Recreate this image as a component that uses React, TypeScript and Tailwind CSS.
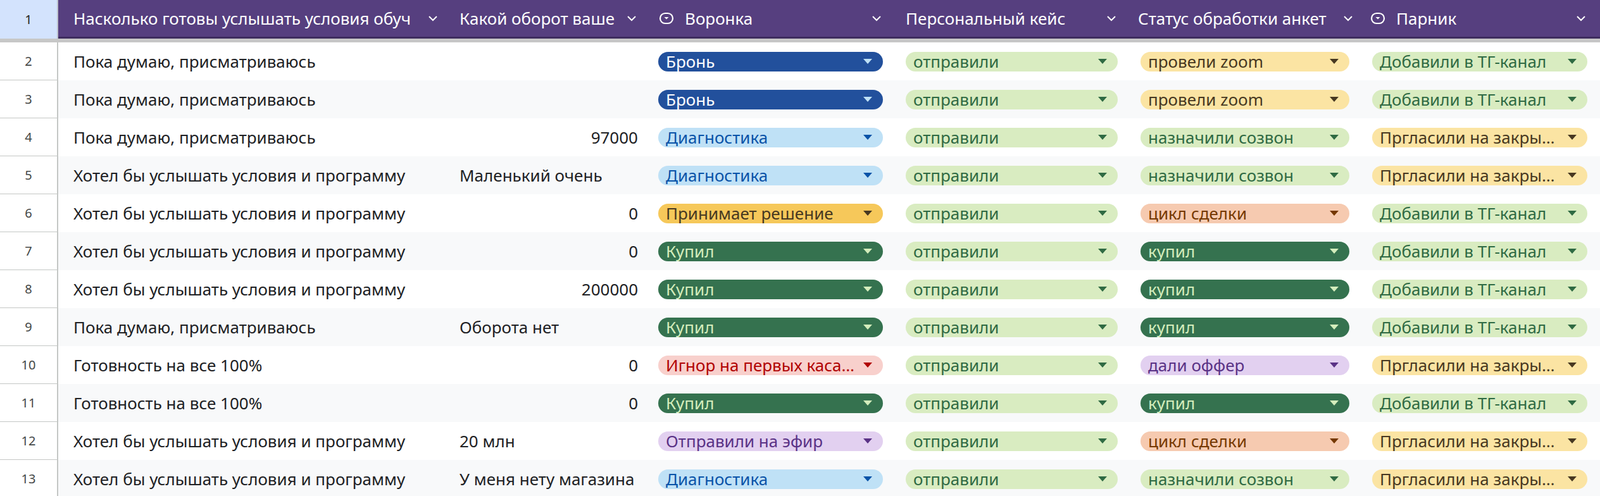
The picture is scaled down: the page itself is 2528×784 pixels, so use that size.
import React from 'react';

type Chip = { t: string; bg: string; fg: string; ar: string };

const C: Record<string, Chip> = {
  bron: { t: 'Бронь', bg: 'bg-[#22509c]', fg: 'text-white', ar: 'text-[#bfe1f6]' },
  diag: { t: 'Диагностика', bg: 'bg-[#bfe1f6]', fg: 'text-[#0a53a8]', ar: 'text-[#0a53a8]' },
  prin: { t: 'Принимает решение', bg: 'bg-[#f6c85a]', fg: 'text-[#473821]', ar: 'text-[#473821]' },
  kupil: { t: 'Купил', bg: 'bg-[#35724f]', fg: 'text-[#d4edbc]', ar: 'text-[#d4edbc]' },
  ignor: { t: 'Игнор на первых каса…', bg: 'bg-[#f8d0cc]', fg: 'text-[#b10202]', ar: 'text-[#b10202]' },
  efir: { t: 'Отправили на эфир', bg: 'bg-[#e2d0f0]', fg: 'text-[#5a3286]', ar: 'text-[#5a3286]' },
  otpr: { t: 'отправили', bg: 'bg-[#d9ecc1]', fg: 'text-[#2f6a43]', ar: 'text-[#2f6a43]' },
  zoom: { t: 'провели zoom', bg: 'bg-[#fbe4a3]', fg: 'text-[#473821]', ar: 'text-[#473821]' },
  sozv: { t: 'назначили созвон', bg: 'bg-[#d9ecc1]', fg: 'text-[#2f6a43]', ar: 'text-[#2f6a43]' },
  cikl: { t: 'цикл сделки', bg: 'bg-[#f6cab0]', fg: 'text-[#753800]', ar: 'text-[#753800]' },
  kup: { t: 'купил', bg: 'bg-[#35724f]', fg: 'text-[#d4edbc]', ar: 'text-[#d4edbc]' },
  offer: { t: 'дали оффер', bg: 'bg-[#e2d0f0]', fg: 'text-[#5a3286]', ar: 'text-[#5a3286]' },
  tg: { t: 'Добавили в ТГ-канал', bg: 'bg-[#d9ecc1]', fg: 'text-[#2f6a43]', ar: 'text-[#2f6a43]' },
  zakr: { t: 'Пргласили на закры…', bg: 'bg-[#fbe4a3]', fg: 'text-[#473821]', ar: 'text-[#473821]' },
};

const A1 = 'Пока думаю, присматриваюсь';
const A2 = 'Хотел бы услышать условия и программу';
const A3 = 'Готовность на все 100%';

const rows: [string, string, boolean, string, string, string][] = [
  [A1, '', false, 'bron', 'zoom', 'tg'],
  [A1, '', false, 'bron', 'zoom', 'tg'],
  [A1, '97000', true, 'diag', 'sozv', 'zakr'],
  [A2, 'Маленький очень', false, 'diag', 'sozv', 'zakr'],
  [A2, '0', true, 'prin', 'cikl', 'tg'],
  [A2, '0', true, 'kupil', 'kup', 'tg'],
  [A2, '200000', true, 'kupil', 'kup', 'tg'],
  [A1, 'Оборота нет', false, 'kupil', 'kup', 'tg'],
  [A3, '0', true, 'ignor', 'offer', 'zakr'],
  [A3, '0', true, 'kupil', 'kup', 'tg'],
  [A2, '20 млн', false, 'efir', 'cikl', 'zakr'],
  [A2, 'У меня нету магазина', false, 'diag', 'sozv', 'zakr'],
];

const Chev = () => (
  <svg width="20" height="20" viewBox="0 0 20 20" className="shrink-0">
    <path d="M4 7l6 6 6-6" fill="none" stroke="white" strokeWidth="2" />
  </svg>
);

const DropIcon = () => (
  <svg width="26" height="26" viewBox="0 0 26 26" className="shrink-0">
    <rect x="3" y="5" width="20" height="16" rx="8" fill="none" stroke="white" strokeWidth="2.2" />
    <path d="M9.5 11l3.5 3.5 3.5-3.5z" fill="white" />
  </svg>
);

const ChipCell = ({ k, w }: { k: string; w: string }) => {
  const c = C[k];
  return (
    <div className={`${w} shrink-0 flex items-center pl-4 pr-5`}>
      <div className={`w-full h-[31px] rounded-full ${c.bg} flex items-center justify-between pl-3 pr-4`}>
        <span className={`${c.fg} text-[26px] leading-none whitespace-nowrap`}>{c.t}</span>
        <svg width="16" height="10" viewBox="0 0 16 10" className={c.ar}>
          <path d="M1 1h14L8 9z" fill="currentColor" />
        </svg>
      </div>
    </div>
  );
};

const W = ['w-[92px]', 'w-[618px]', 'w-[314px]', 'w-[391px]', 'w-[371px]', 'w-[366px]', 'w-[376px]'];

export default function App() {
  return (
    <div className="w-[2528px] h-[784px] overflow-hidden bg-white font-['Roboto',sans-serif] text-[26px] text-[#202124]">
      <div className="flex h-[61px]">
        <div className={`${W[0]} shrink-0 bg-[#d3e3fd] flex items-center justify-center text-[20px] text-[#1f1f1f] border-r-2 border-[#bcc3cc]`}>1</div>
        <div className="flex flex-1 bg-[#563f7f] text-white border-b-[3px] border-[#3e2c5e]">
          <div className={`${W[1]} shrink-0 flex items-center gap-2 pl-6 pr-4 overflow-hidden`}>
            <span className="whitespace-nowrap overflow-hidden flex-1">Насколько готовы услышать условия обуч</span><Chev />
          </div>
          <div className={`${W[2]} shrink-0 flex items-center gap-2 pl-4 pr-4 overflow-hidden`}>
            <span className="whitespace-nowrap overflow-hidden flex-1">Какой оборот ваше</span><Chev />
          </div>
          <div className={`${W[3]} shrink-0 flex items-center gap-4 pl-4 pr-5`}>
            <DropIcon /><span className="flex-1">Воронка</span><Chev />
          </div>
          <div className={`${W[4]} shrink-0 flex items-center pl-4 pr-5`}>
            <span className="flex-1">Персональный кейс</span><Chev />
          </div>
          <div className={`${W[5]} shrink-0 flex items-center pl-3 pr-3`}>
            <span className="flex-1 whitespace-nowrap overflow-hidden">Статус обработки анкет</span><Chev />
          </div>
          <div className={`${W[6]} shrink-0 flex items-center gap-4 pl-3 pr-5`}>
            <DropIcon /><span className="flex-1">Парник</span><Chev />
          </div>
        </div>
      </div>
      <div className="h-[6px] bg-[#c7c7c7]" />
      {rows.map((r, i) => (
        <div key={i} className={`flex h-[60px] ${i % 2 ? 'bg-[#f8f9fa]' : 'bg-white'}`}>
          <div className={`${W[0]} shrink-0 bg-white flex items-center justify-center text-[20px] text-[#444746] border-r-2 border-b border-[#c4c7c5]`}>{i + 2}</div>
          <div className={`${W[1]} shrink-0 flex items-center pl-6 whitespace-nowrap overflow-hidden`}>{r[0]}</div>
          <div className={`${W[2]} shrink-0 flex items-center px-4 whitespace-nowrap overflow-hidden ${r[2] ? 'justify-end' : ''}`}>{r[1]}</div>
          <ChipCell k={r[3]} w={W[3]} />
          <ChipCell k="otpr" w={W[4]} />
          <ChipCell k={r[4]} w={W[5]} />
          <ChipCell k={r[5]} w={W[6]} />
        </div>
      ))}
    </div>
  );
}
